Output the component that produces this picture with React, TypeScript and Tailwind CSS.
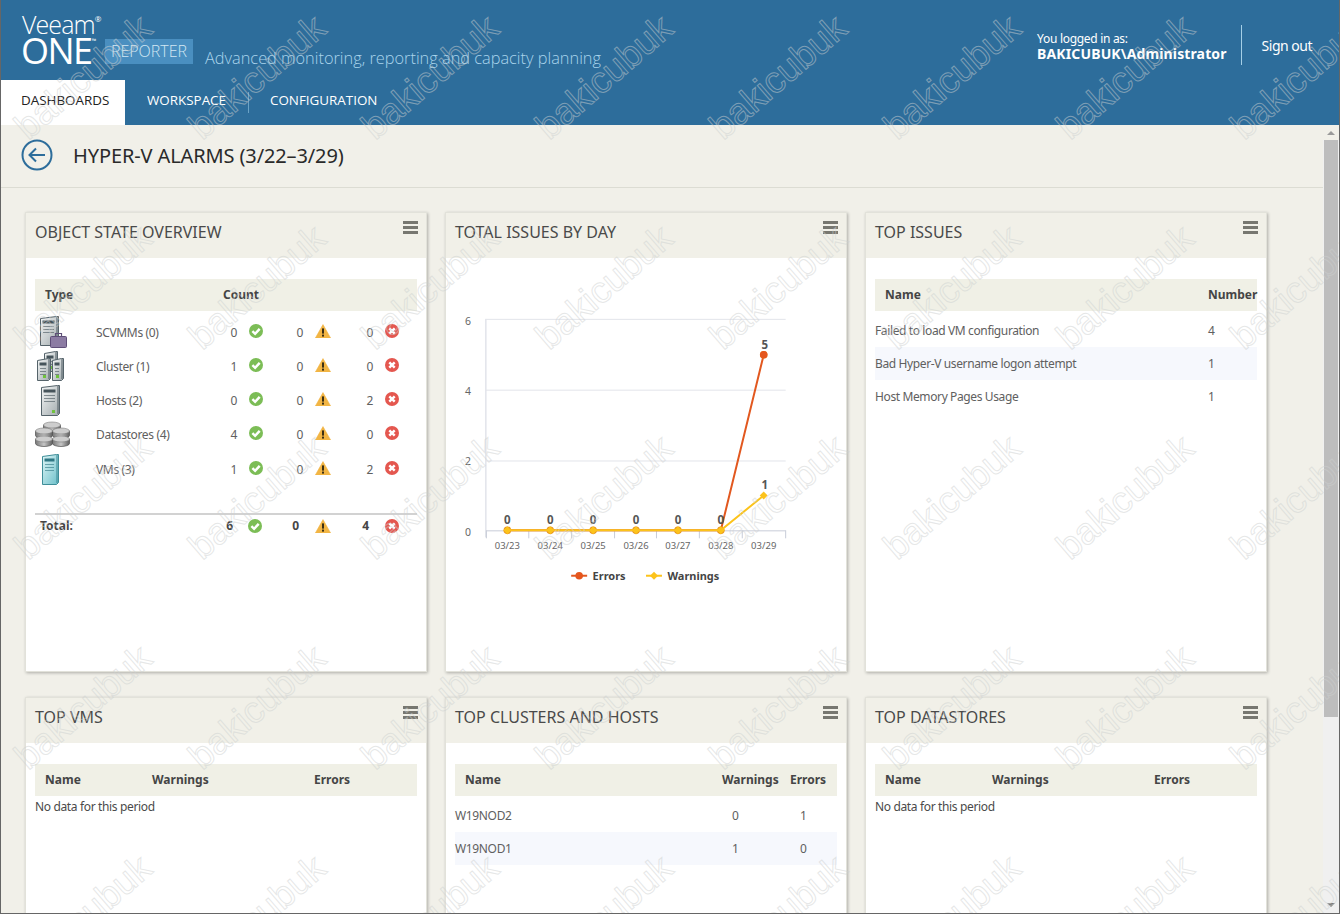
import React from "react";

const Check = () => (
  <svg width="14" height="14" viewBox="0 0 14 14" className="block">
    <circle cx="7" cy="7" r="7" fill="#7cbd56" />
    <path d="M3.4 7.2 L6.1 9.8 L10.7 4.8" fill="none" stroke="#fff" strokeWidth="2.5" />
  </svg>
);
const Warn = () => (
  <svg width="16" height="14" viewBox="0 0 16 14" className="block">
    <path d="M8 0.6 L15.6 14 L0.4 14 Z" fill="#f2b544" stroke="#f2b544" strokeWidth="0.6" strokeLinejoin="round" />
    <rect x="7" y="4.4" width="2" height="5.2" fill="#3b2f14" />
    <rect x="7" y="10.6" width="2" height="2" fill="#3b2f14" />
  </svg>
);
const Bad = () => (
  <svg width="14" height="14" viewBox="0 0 14 14" className="block">
    <circle cx="7" cy="7" r="7" fill="#e4574f" />
    <path d="M4.3 4.3 L9.7 9.7 M9.7 4.3 L4.3 9.7" fill="none" stroke="#fff" strokeWidth="2.4" />
  </svg>
);

const MenuIcon = () => (
  <svg width="15" height="13" viewBox="0 0 15 13" className="block shrink-0">
    <rect width="15" height="3" fill="#777770" />
    <rect y="5" width="15" height="3" fill="#777770" />
    <rect y="10" width="15" height="3" fill="#777770" />
  </svg>
);

function Tower({ x, y, w, h, fill = "url(#grayGrad)", stroke = "#55636a", led = "#6fc23d", slot = "#46545b" }: { x: number; y: number; w: number; h: number; fill?: string; stroke?: string; led?: string; slot?: string }) {
  return (
    <g>
      <path d={`M${x + 0.5} ${y + 2.5} L${x + w - 2.5} ${y + 0.5} L${x + w - 0.5} ${y + 0.5} L${x + w - 0.5} ${y + h - 2.5} L${x + w - 2.5} ${y + h - 0.5} L${x + 0.5} ${y + h - 0.5} Z`} fill={fill} stroke={stroke} />
      <rect x={x + w - 3} y={y + 1} width="2" height={h - 3} fill={stroke} opacity="0.55" />
      <rect x={x + 2.5} y={y + 4.5} width={w - 7} height="3" fill={slot} />
      <path d={`M${x + 3} ${y + 10.5} H${x + w - 5} M${x + 3} ${y + 13.5} H${x + w - 5} M${x + 3} ${y + 16.5} H${x + w - 5}`} stroke={slot} strokeWidth="1" opacity="0.6" />
      {led && <rect x={x + w - 8} y={y + h - 6} width="3" height="3" fill={led} />}
    </g>
  );
}

const Disk = ({ cx, cy }: { cx: number; cy: number }) => (
  <g>
    <path d={`M${cx - 8.5} ${cy} V${cy + 4.5} A8.5 3 0 0 0 ${cx + 8.5} ${cy + 4.5} V${cy} Z`} fill="url(#diskGrad)" stroke="#4f4f4f" strokeWidth="0.7" />
    <ellipse cx={cx} cy={cy} rx="8.5" ry="3" fill="#cdcdcd" stroke="#7d7d7d" strokeWidth="0.6" />
  </g>
);

const rowIcons: Record<string, React.ReactNode> = {
  SCVMMs: (
    <>
      <Tower x={40} y={316} w={19} h={30} led="" />
      <rect x={50.5} y={336.5} width="16" height="11" rx="1" fill="#8c7ca3" stroke="#5f4f78" />
      <path d="M55.5 336 V333.5 H61.5 V336" fill="none" stroke="#5f4f78" strokeWidth="1.2" />
    </>
  ),
  Cluster: (
    <>
      <Tower x={44} y={351} w={14} h={21} />
      <Tower x={37} y={358} w={14} h={23} />
      <Tower x={52} y={358} w={12} h={23} />
    </>
  ),
  Hosts: <Tower x={41} y={385} w={19} h={31} />,
  Datastores: (
    <>
      <Disk cx={52} cy={425} />
      <Disk cx={44} cy={431} />
      <Disk cx={61} cy={431} />
      <Disk cx={44} cy={439} />
      <Disk cx={61} cy={439} />
    </>
  ),
  VMs: <Tower x={42} y={454} w={17} h={31} fill="url(#tealGrad)" stroke="#3f8e99" led="" slot="#2f7783" />,
};

const overviewRows = [
  { key: "SCVMMs", label: "SCVMMs (0)", c: [0, 0, 0], top: 315, h: 34 },
  { key: "Cluster", label: "Cluster (1)", c: [1, 0, 0], top: 349, h: 34 },
  { key: "Hosts", label: "Hosts (2)", c: [0, 0, 2], top: 383, h: 34 },
  { key: "Datastores", label: "Datastores (4)", c: [4, 0, 0], top: 417, h: 34 },
  { key: "VMs", label: "VMs (3)", c: [1, 0, 2], top: 451, h: 36 },
];

function CardHead({ title }: { title: string }) {
  return (
    <header className="h-[45px] bg-[#f1f0e8] flex justify-between items-start pl-[9px] pr-[8px] shrink-0">
      <h2 className="text-[16px] leading-[22px] pt-[8px] text-[#4a4a4a] font-normal">{title}</h2>
      <div className="pt-[8px]"><MenuIcon /></div>
    </header>
  );
}

function Card({ title, children }: { title: string; children: React.ReactNode }) {
  return (
    <section className="bg-white border border-[#e2e2da] shadow-[1px_1px_3px_rgba(0,0,0,0.28)] flex flex-col">
      <CardHead title={title} />
      <div className="px-[9px] pt-[21px] flex-1">{children}</div>
    </section>
  );
}

function Overview() {
  return (
    <div className="text-[12px] text-[#606060] tracking-[-0.35px]">
      <div className="h-[32px] bg-[#f0f0e6] flex items-center font-bold text-[#454545] tracking-normal">
        <span className="ml-[10px] w-[178px]">Type</span>
        <span>Count</span>
      </div>
      <div className="h-[4px]" />
      {overviewRows.map((r) => (
        <div key={r.key} className="grid grid-cols-[61px_141px_26px_40px_28px_42px_26px] items-center" style={{ height: r.h }}>
          <svg width="40" height={r.h} viewBox={`35 ${r.top} 40 ${r.h}`} className="block overflow-visible">{rowIcons[r.key]}</svg>
          <span className="flex justify-between pt-[2px]">
            <span>{r.label}</span>
            <span>{r.c[0]}</span>
          </span>
          <span className="flex justify-end -mt-[3px]"><Check /></span>
          <span className="text-right pt-[2px]">{r.c[1]}</span>
          <span className="flex justify-end -mt-[3px]"><Warn /></span>
          <span className="text-right pt-[2px]">{r.c[2]}</span>
          <span className="flex justify-end -mt-[3px]"><Bad /></span>
        </div>
      ))}
      <div className="mt-[26px] border-t-2 border-[#d2d2d2] h-[23px] grid grid-cols-[198px_29px_37px_32px_38px_30px] items-center font-bold text-[#454545] tracking-normal">
        <span className="pl-[5px] flex justify-between"><span>Total:</span><span>6</span></span>
        <span className="flex justify-end"><Check /></span>
        <span className="text-right">0</span>
        <span className="flex justify-end"><Warn /></span>
        <span className="text-right">4</span>
        <span className="flex justify-end"><Bad /></span>
      </div>
    </div>
  );
}

const xs = [507, 550, 593, 636, 678, 721, 764];
const ticks = [486, 528.5, 571.5, 614.5, 656.5, 699.5, 742.5, 786];
const labels = ["03/23", "03/24", "03/25", "03/26", "03/27", "03/28", "03/29"];

const Diamond = ({ x, y, c = "#fcc31b" }: { x: number; y: number; c?: string }) => (
  <path d={`M${x} ${y - 4} L${x + 4} ${y} L${x} ${y + 4} L${x - 4} ${y} Z`} fill={c} />
);

function Chart() {
  const t = "'Noto Sans', sans-serif";
  return (
    <svg width="400" height="414" viewBox="446 258 400 414" className="block" fontFamily={t}>
      {[319.5, 390.5, 461.5].map((y) => (
        <path key={y} d={`M486 ${y} H786`} stroke="#e2e4ea" />
      ))}
      <path d="M485.5 319 V538" stroke="#d3d6e0" />
      <path d="M486 531.5 H786" stroke="#c8ccd8" />
      {ticks.map((x) => (
        <path key={x} d={`M${x} 531 V539`} stroke="#c8ccd8" />
      ))}
      {[["6", 325], ["4", 395], ["2", 466], ["0", 537]].map(([l, y]) => (
        <text key={l} x="467.5" y={y} textAnchor="middle" fontSize="10.5" fill="#666">{l}</text>
      ))}
      {labels.map((l, i) => (
        <text key={l} x={xs[i]} y="550" textAnchor="middle" fontSize="9.5" fill="#666">{l}</text>
      ))}
      <polyline points="507,531 721,531 764,355" fill="none" stroke="#e2581f" strokeWidth="2" />
      {xs.map((x, i) => (
        <circle key={x} cx={x} cy={i === 6 ? 355 : 531} r="3.8" fill="#e8921c" />
      ))}
      <circle cx="764" cy="355" r="3.8" fill="#e5561d" />
      <polyline points="507,531 721,531 764,496" fill="none" stroke="#fcc31b" strokeWidth="2" />
      {xs.map((x, i) => (
        <Diamond key={x} x={x} y={i === 6 ? 496 : 531} />
      ))}
      {xs.slice(0, 6).map((x) => (
        <text key={x} x={x} y="525" textAnchor="middle" fontSize="11.5" fontWeight="700" fill="#555">0</text>
      ))}
      <text x="765" y="349" textAnchor="middle" fontSize="11.5" fontWeight="700" fill="#555">5</text>
      <text x="765" y="490" textAnchor="middle" fontSize="11.5" fontWeight="700" fill="#555">1</text>
      <path d="M571 576.5 H587" stroke="#e2581f" strokeWidth="2" />
      <circle cx="579" cy="576.5" r="3.8" fill="#e5561d" />
      <text x="592.5" y="580.5" fontSize="11" fontWeight="700" fill="#444">Errors</text>
      <path d="M646 576.5 H662" stroke="#fcc31b" strokeWidth="2" />
      <Diamond x={654} y={576.5} />
      <text x="667.5" y="580.5" fontSize="11" fontWeight="700" fill="#444">Warnings</text>
    </svg>
  );
}

function TopIssues() {
  const rows = [
    ["Failed to load VM configuration", "4"],
    ["Bad Hyper-V username logon attempt", "1"],
    ["Host Memory Pages Usage", "1"],
  ];
  return (
    <div className="text-[12px] text-[#606060] tracking-[-0.38px]">
      <div className="h-[32px] bg-[#f0f0e6] grid grid-cols-[333px_49px] items-center font-bold text-[#454545] tracking-normal">
        <span className="pl-[10px]">Name</span>
        <span>Number</span>
      </div>
      <div className="h-[3px]" />
      {rows.map((r, i) => (
        <div key={r[0]} className={`h-[33px] grid grid-cols-[333px_49px] items-center ${i === 1 ? "bg-[#f6f8fd]" : ""}`}>
          <span>{r[0]}</span>
          <span>{r[1]}</span>
        </div>
      ))}
    </div>
  );
}

function NoData() {
  return (
    <div className="text-[12px] text-[#5a5a5a] tracking-[-0.35px]">
      <div className="h-[32px] bg-[#f0f0e6] grid grid-cols-[117px_162px_1fr] items-center font-bold text-[#454545] tracking-normal">
        <span className="pl-[10px]">Name</span>
        <span>Warnings</span>
        <span>Errors</span>
      </div>
      <div className="h-[22px] leading-[22px] text-[#4a4a4a]">No data for this period</div>
    </div>
  );
}

function TopClusters() {
  const rows = [
    ["W19NOD2", "0", "1"],
    ["W19NOD1", "1", "0"],
  ];
  return (
    <div className="text-[12px] text-[#606060] tracking-[-0.35px]">
      <div className="h-[32px] bg-[#f0f0e6] grid grid-cols-[267px_68px_1fr] items-center font-bold text-[#454545] tracking-normal">
        <span className="pl-[10px]">Name</span>
        <span>Warnings</span>
        <span>Errors</span>
      </div>
      <div className="h-[3px]" />
      {rows.map((r, i) => (
        <div key={r[0]} className={`h-[33px] grid grid-cols-[277px_68px_1fr] items-center ${i === 1 ? "bg-[#f6f8fd]" : ""}`}>
          <span>{r[0]}</span>
          <span>{r[1]}</span>
          <span>{r[2]}</span>
        </div>
      ))}
    </div>
  );
}

function Watermarks() {
  const items: { x: number; y: number }[] = [];
  for (let r = 0; r < 5; r++) {
    for (let c = 0; c < 8; c++) {
      items.push({ x: 82 + c * 173.7, y: 77 + r * 210 });
    }
  }
  return (
    <div className="absolute inset-0 overflow-hidden pointer-events-none">
      {items.map((p) => (
        <span
          key={`${p.x}-${p.y}`}
          className="absolute font-['Liberation_Sans',sans-serif] text-[37px] leading-none text-transparent [-webkit-text-stroke:1px_rgba(205,208,208,0.5)] -translate-x-1/2 -translate-y-1/2 -rotate-[41deg]"
          style={{ left: p.x, top: p.y }}
        >
          bakicubuk
        </span>
      ))}
    </div>
  );
}

export default function App() {
  return (
    <div className="relative w-[1340px] h-[914px] overflow-hidden bg-[#f1f0e9] border-x border-b border-[#666666] font-['Noto_Sans',sans-serif] flex flex-col">
      <svg width="0" height="0" className="absolute">
        <defs>
          <linearGradient id="grayGrad" x1="0" y1="0" x2="1" y2="1">
            <stop offset="0" stopColor="#f5f7f7" />
            <stop offset="1" stopColor="#a1aaad" />
          </linearGradient>
          <linearGradient id="tealGrad" x1="0" y1="0" x2="1" y2="1">
            <stop offset="0" stopColor="#dff5f6" />
            <stop offset="1" stopColor="#6cc0ca" />
          </linearGradient>
          <linearGradient id="diskGrad" x1="0" y1="0" x2="1" y2="0">
            <stop offset="0" stopColor="#777777" />
            <stop offset="0.5" stopColor="#c6c6c6" />
            <stop offset="1" stopColor="#5f5f5f" />
          </linearGradient>
        </defs>
      </svg>

      <header className="h-[125px] bg-[#2d6d9b] shrink-0 flex flex-col font-['Open_Sans',sans-serif]">
        <div className="h-[80px] flex items-start">
          <div className="ml-[21px] w-[83px] pt-[11px] text-white font-light">
            <div className="text-[25px] leading-[27px] relative w-fit tracking-[-0.9px]">
              Veeam<span className="absolute left-full top-[4px] text-[8px] leading-none font-normal">®</span>
            </div>
            <div className="text-[36px] leading-[26px] -ml-[1px] relative w-fit tracking-[-1.5px] font-normal">
              ONE<span className="absolute left-full top-0 text-[6px] leading-none font-normal tracking-normal">™</span>
            </div>
          </div>
          <div className="mt-[39px] h-[25px] w-[88px] bg-[#4a8fc0] text-[#d2e7f3] text-[16px] leading-[25px] text-center font-light">REPORTER</div>
          <div className="mt-[46px] ml-[12px] text-[16.35px] leading-[24px] text-[#a9d4ec] font-light">Advanced monitoring, reporting and capacity planning</div>
          <div className="ml-auto flex items-center mt-[26px] h-[40px] text-white font-['Noto_Sans',sans-serif]">
            <div className="leading-[15px]">
              <div className="text-[12px] tracking-[-0.3px]">You logged in as:</div>
              <div className="text-[14px] font-bold tracking-[0.13px]">BAKICUBUK\Administrator</div>
            </div>
            <div className="ml-[14px] w-px h-[40px] -mt-[2px] bg-[#a5cfe6]" />
            <div className="ml-[20px] mr-[27px] text-[14px] tracking-[-0.5px] -mt-[2px]">Sign out</div>
          </div>
        </div>
        <nav className="h-[45px] flex items-stretch text-[13.4px]">
          <div className="w-[124px] bg-white text-[#222] flex items-center pl-[20px] pb-[4px]">DASHBOARDS</div>
          <div className="pl-[22px] pr-[22px] flex items-center text-white pb-[4px]">
            <span>WORKSPACE</span>
          </div>
          <div className="w-px h-[21px] mt-[12px] bg-[#6ba3c6]" />
          <div className="pl-[21px] flex items-center text-white pb-[4px]">CONFIGURATION</div>
        </nav>
      </header>

      <div className="flex flex-1 min-h-0">
        <main className="flex-1 min-w-0 overflow-hidden">
          <div className="h-[63px] border-b border-[#dcdcd3] flex items-center pl-[20px] pb-[2px]">
            <svg width="32" height="32" viewBox="0 0 32 32" className="block shrink-0">
              <circle cx="16" cy="16" r="14.5" fill="none" stroke="#2d6d9b" strokeWidth="2" />
              <path d="M24 16 H9 M15 9.5 L8.5 16 L15 22.5" fill="none" stroke="#2d6d9b" strokeWidth="2" />
            </svg>
            <h1 className="ml-[20px] text-[20px] text-[#2a2a2a] font-normal tracking-[-0.12px] pt-[2px]">HYPER-V ALARMS (3/22–3/29)</h1>
          </div>
          <div className="pl-[24px] pt-[24px] grid grid-cols-[402px_402px_402px] grid-rows-[460px_300px] gap-x-[18px] gap-y-[25px]">
            <Card title="OBJECT STATE OVERVIEW"><Overview /></Card>
            <section className="bg-white border border-[#e2e2da] shadow-[1px_1px_3px_rgba(0,0,0,0.28)] flex flex-col">
              <CardHead title="TOTAL ISSUES BY DAY" />
              <Chart />
            </section>
            <Card title="TOP ISSUES"><TopIssues /></Card>
            <Card title="TOP VMS"><NoData /></Card>
            <Card title="TOP CLUSTERS AND HOSTS"><TopClusters /></Card>
            <Card title="TOP DATASTORES"><NoData /></Card>
          </div>
        </main>
        <aside className="w-[16px] shrink-0 bg-[#f0f0f0] flex flex-col items-center">
          <div className="h-[15px] w-full bg-[#f1f0e9] flex items-center justify-center">
            <div className="w-0 h-0 border-x-[4px] border-x-transparent border-b-[4px] border-b-[#9a9a9a]" />
          </div>
          <div className="w-[14px] h-[577px] bg-[#bdbdbd]" />
          <div className="flex-1 w-full flex items-end justify-center pb-[6px]">
            <div className="w-0 h-0 border-x-[4px] border-x-transparent border-t-[4px] border-t-[#777]" />
          </div>
        </aside>
      </div>
      <Watermarks />
    </div>
  );
}
